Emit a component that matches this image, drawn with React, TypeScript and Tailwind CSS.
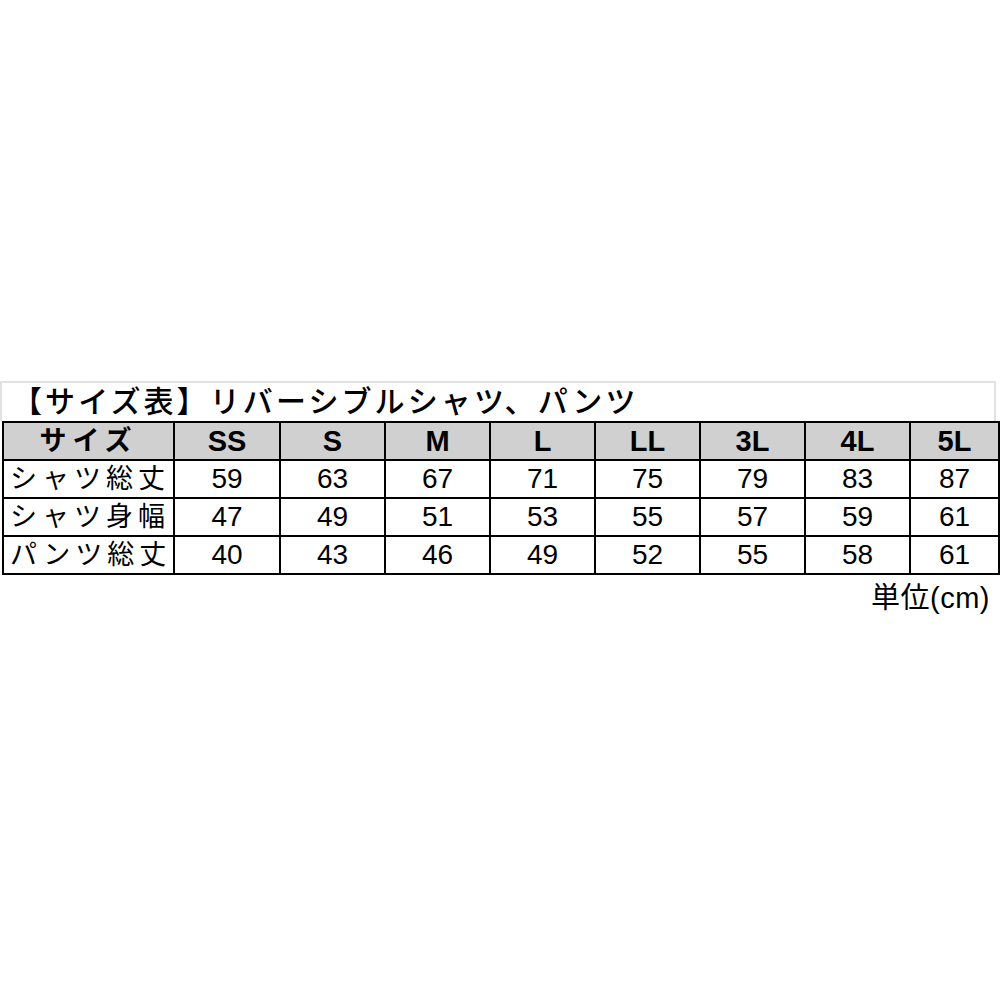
const heads = ["SS", "S", "M", "L", "LL", "3L", "4L", "5L"];
const rows: [string, number[]][] = [
  ["シャツ総丈", [59, 63, 67, 71, 75, 79, 83, 87]],
  ["シャツ身幅", [47, 49, 51, 53, 55, 57, 59, 61]],
  ["パンツ総丈", [40, 43, 46, 49, 52, 55, 58, 61]],
];
const widths = ["w-[106px]", "w-[105px]", "w-[105px]", "w-[105px]", "w-[105px]", "w-[105px]", "w-[105px]", "w-[89px]"];

export default function App() {
  return (
    <div className="w-[1000px] h-[1000px] bg-white pt-[381px] font-['Liberation_Sans','Noto_Sans_CJK_JP',sans-serif] text-black">
      <div className="w-[996px] h-[40px] border-t-2 border-x-2 border-[#e2e2e2] pl-[10px] text-[30px] font-medium leading-[38px] tracking-[3.1px] whitespace-nowrap">
        【サイズ表】リバーシブルシャツ、パンツ
      </div>
      <table className="ml-[2px] w-[995px] border-collapse border-2 border-black table-fixed">
        <thead>
          <tr className="h-[38px] bg-[#d0d0d0]">
            <th className="w-[171px] border-2 border-black p-0 text-[27px] font-bold tracking-[6px] leading-none">サイズ</th>
            {heads.map((h, i) => (
              <th key={h} className={`${widths[i]} border-2 border-black p-0 text-[29px] font-bold leading-none`}>
                {h}
              </th>
            ))}
          </tr>
        </thead>
        <tbody>
          {rows.map(([label, vals]) => (
            <tr key={label} className="h-[38px]">
              <td className="border-2 border-black p-0 pl-[6px] text-[27px] tracking-[5px] leading-none whitespace-nowrap">{label}</td>
              {vals.map((v, i) => (
                <td key={i} className="border-2 border-black p-0 text-center text-[28px] leading-none">
                  {v}
                </td>
              ))}
            </tr>
          ))}
        </tbody>
      </table>
      <div className="w-[990px] text-right text-[29px] tracking-[0.5px] leading-[46px]">単位(cm)</div>
    </div>
  );
}
